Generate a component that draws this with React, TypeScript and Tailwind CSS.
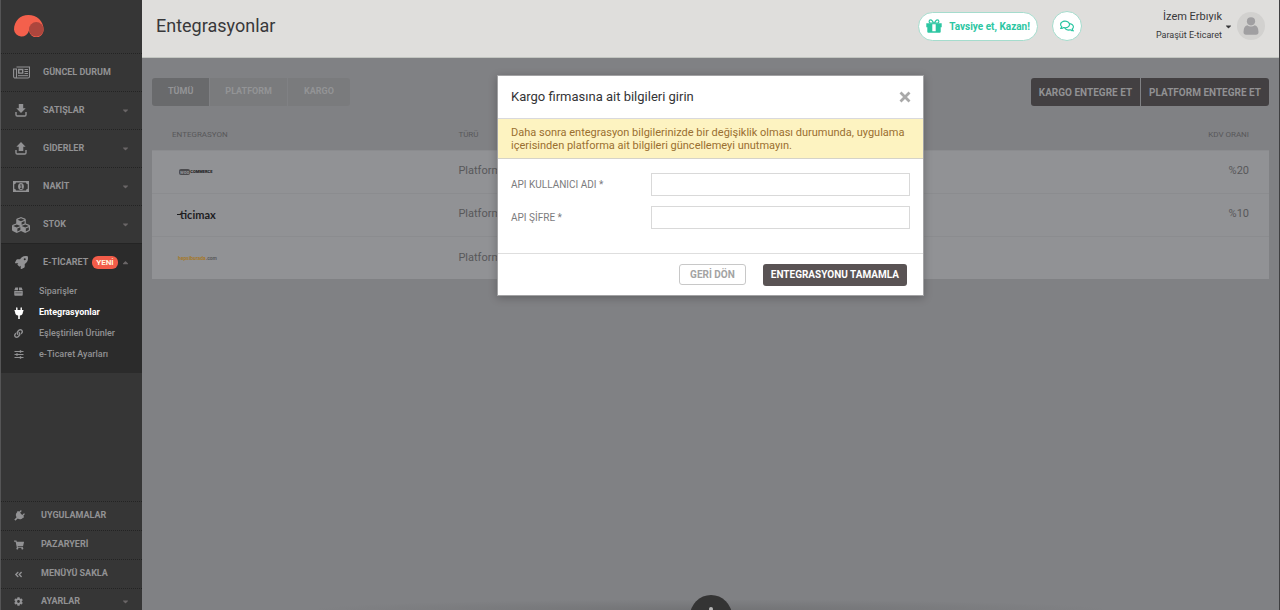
import type { ReactNode } from "react";
import {
  FaAngleDoubleLeft,
  FaCaretDown,
  FaCaretUp,
  FaCog,
  FaCubes,
  FaLink,
  FaRegComments,
  FaRocket,
  FaShoppingCart,
} from "react-icons/fa";

function NewsIcon() {
  return (
    <svg viewBox="0 0 17 13" className="h-[13px] w-[17px]" fill="none" stroke="currentColor">
      <path d="M3.5 1h13v9.5a1.5 1.5 0 0 1-1.5 1.5H2.2A1.5 1.5 0 0 1 .6 10.500V3H3.500v7.500a1.400 1.400 0 0 1-1.400 1.500" strokeWidth="1.1" />
      <path d="M5.700 3.500h4v3.600h-4z" strokeWidth="1.400" />
      <path d="M11.500 3.500h3.500M11.500 5.500h3.500M11.500 7.500h3.500M5 9.700h10" />
    </svg>
  );
}

function TrayIcon({ up = false }: { up?: boolean }) {
  return (
    <svg viewBox="0 0 12 13" className="h-[13px] w-3" fill="currentColor">
      {up ? <path d="M6 0 10.600 4.700H8.300V9H3.700V4.700H1.400z" /> : <path d="M3.800 0h4.400v4.300h2.500L6 9 1.300 4.300h2.500z" />}
      <path d="M1 8v2.800Q1 12 2.200 12h7.600Q11 12 11 10.800V8" fill="none" stroke="currentColor" strokeWidth="1.400" />
    </svg>
  );
}

function CashIcon() {
  return (
    <svg viewBox="0 0 16 11" className="h-[11px] w-4">
      <path
        fill="currentColor"
        fillRule="evenodd"
        d="M0 0h16v11H0zM3 1.400A1.800 1.800 0 0 1 1.300 3.200v4.600A1.800 1.800 0 0 1 3 9.600h10a1.800 1.800 0 0 1 1.700-1.800V3.200A1.800 1.800 0 0 1 13 1.400z"
      />
      <ellipse cx="8" cy="5.500" rx="2.900" ry="3.600" fill="currentColor" />
      <path d="M7.200 4.200 8.200 3.500v3.700M7 7.500h2.300" stroke="#363636" fill="none" strokeWidth=".9" />
    </svg>
  );
}

function BoxIcon() {
  return (
    <svg viewBox="0 0 10 10" className="h-[9px] w-[9px]" fill="currentColor">
      <path d="M1.500.5h3v3.200H.3zM5.500.5h3l1.200 3.200H5.500zM.3 4.500h9.400v4.300q0 .9-.9.900H1.200q-.9 0-.9-.9z" />
      <path d="M1.500 6.500h7" stroke="#2b2b2b" strokeWidth=".6" />
    </svg>
  );
}

function PlugIcon() {
  return (
    <svg viewBox="0 0 10 12" className="h-3 w-[10px]" fill="currentColor">
      <path d="M2.100.8Q2.800-.2 3.500.8V3h3V.8Q7.200-.2 7.900.8V3h1.300q.7.700 0 1.400H9C9 7 7.800 8.200 5.800 8.600V12H4.200V8.600C2.200 8.200 1 7 1 4.400H.8Q.1 3.700.8 3h1.300z" />
    </svg>
  );
}

function SlidersIcon() {
  return (
    <svg viewBox="0 0 10 9" className="h-[9px] w-[10px]" stroke="currentColor" fill="none">
      <path d="M.5 1.500h9M.5 4.500h9M.5 7.500h9" />
      <path d="M6.500.3v2.400M3 3.300v2.400M6.500 6.300v2.400" strokeWidth="1.400" />
    </svg>
  );
}

function GiftIcon() {
  return (
    <svg viewBox="0 0 16 14" className="h-[14px] w-4" fill="currentColor">
      <path d="M.3 4.200h6v4h-6zM9.700 4.200h6v4h-6zM1.300 8.200h5v5.500H2.300q-1 0-1-1zM9.700 8.200h5v4.500q0 1-1 1h-4zM6.300 12.200h3.400v1.500H6.300zM6.300 4.200h3.400v1H6.300z" />
      <path d="M7.500 4C6.500 1.500 5.500.8 4.700.8a1.600 1.600 0 0 0 0 3.200zm1 0C9.500 1.500 10.500.8 11.300.8a1.600 1.600 0 0 1 0 3.200z" fill="none" stroke="currentColor" strokeWidth="1.200" />
    </svg>
  );
}

const mainMenu = [
  { label: "GÜNCEL DURUM", icon: <NewsIcon />, caret: false },
  { label: "SATIŞLAR", icon: <TrayIcon />, caret: true },
  { label: "GİDERLER", icon: <TrayIcon up />, caret: true },
  { label: "NAKİT", icon: <CashIcon />, caret: true },
  { label: "STOK", icon: <FaCubes size={18} />, caret: true },
];

const subMenu = [
  { label: "Siparişler", icon: <BoxIcon />, active: false },
  { label: "Entegrasyonlar", icon: <PlugIcon />, active: true },
  { label: "Eşleştirilen Ürünler", icon: <FaLink size={9} />, active: false },
  { label: "e-Ticaret Ayarları", icon: <SlidersIcon />, active: false },
];

const bottomMenu = [
  { label: "UYGULAMALAR", icon: <span className="rotate-45"><PlugIcon /></span> },
  { label: "PAZARYERİ", icon: <FaShoppingCart size={10} /> },
  { label: "MENÜYÜ SAKLA", icon: <FaAngleDoubleLeft size={9} /> },
];

const rows = [
  { id: "woo", logo: <WooLogo />, type: "Platform", vat: "%20" },
  { id: "ticimax", logo: <TicimaxLogo />, type: "Platform", vat: "%10" },
  { id: "hepsiburada", logo: <HepsiLogo />, type: "Platform", vat: "" },
];

function WooLogo() {
  return (
    <span className="ml-[7px] flex items-center text-[#1d1d1f]">
      <span className="rounded-xs bg-[#4b4b4e] px-px text-[5px] leading-[6px] font-bold text-[#919295]">woo</span>
      <span className="text-[4px] leading-[6px] font-black">COMMERCE</span>
    </span>
  );
}

function TicimaxLogo() {
  return (
    <span className="ml-[5px] flex items-center text-[#1d1d1f]">
      <span className="-mr-px h-px w-1 bg-[#1d1d1f]" />
      <span className="font-[Lato,sans-serif] text-[11px] leading-3 font-bold">ticimax</span>
    </span>
  );
}

function HepsiLogo() {
  return (
    <span className="ml-[6px] block text-[5px] leading-[6px] font-bold text-[#a5792a]">
      hepsiburada<span className="text-[#5b5b5d]">.com</span>
    </span>
  );
}

function BottomRow({ icon, children }: { icon: ReactNode; children: ReactNode }) {
  return (
    <>
      <span className="flex w-[11px] justify-center">{icon}</span>
      <span className="ml-[17px]">{children}</span>
    </>
  );
}

function Sidebar() {
  return (
    <aside className="flex h-screen w-[142px] shrink-0 flex-col overflow-hidden border-l border-[#555556] bg-[#363636] text-[9px] font-bold text-[#929294]">
      <a href="#" aria-label="Paraşüt" className="block h-[53px] shrink-0 pt-[15px] pl-[13px]">
        <svg viewBox="0 0 30 22" className="h-[22px] w-[30px]">
          <path fill="#f4604c" d="M0 14.500C0 6 6.300 0 14.300 0 22.800 0 29.600 6 29.600 14.500A7.300 7.300 0 0 1 15 15.600 7.600 7.600 0 0 1 0 14.500z" />
          <circle cx="22.300" cy="14.300" r="7.300" fill="#ad463d" />
        </svg>
      </a>
      <nav>
        {mainMenu.map((item) => (
          <a key={item.label} href="#" className="flex h-[38px] items-center border-t border-dotted border-[#232323] pr-3 pl-[11px]">
            <span className="flex w-[18px] justify-center">{item.icon}</span>
            <span className="ml-[13px] flex-1">{item.label}</span>
            {item.caret && <FaCaretDown size={9} className="text-[#6a6667]" />}
          </a>
        ))}
        <div className="border-t border-[#242424] bg-[#2b2b2b] pb-2">
          <a href="#" className="flex h-[37px] items-center pr-3 pl-[11px]">
            <span className="flex w-[18px] justify-center">
              <FaRocket size={13} />
            </span>
            <span className="ml-[13px] whitespace-nowrap">E-TİCARET</span>
            <span className="ml-1 rounded-md bg-[#f25c49] px-1 text-[8px] leading-[13px] text-[#fff3df]">YENİ</span>
            <FaCaretUp size={9} className="ml-auto text-[#6a6667]" />
          </a>
          {subMenu.map((item) => (
            <a
              key={item.label}
              href="#"
              className={`flex h-[21px] items-center pl-3 ${item.active ? "font-bold text-white" : "font-medium"}`}
            >
              <span className="flex w-[11px] justify-center">{item.icon}</span>
              <span className="ml-[15px]">{item.label}</span>
            </a>
          ))}
        </div>
      </nav>
      <nav className="mt-auto">
        {bottomMenu.map((item) => (
          <a key={item.label} href="#" className="flex h-[29px] items-center border-t border-dotted border-[#232323] pl-3">
            <BottomRow icon={item.icon}>{item.label}</BottomRow>
          </a>
        ))}
        <a href="#" className="flex h-[22px] items-center border-t border-dotted border-[#232323] pt-1 pr-3 pl-3">
          <BottomRow icon={<FaCog size={9} />}>AYARLAR</BottomRow>
          <FaCaretDown size={9} className="ml-auto text-[#6a6667]" />
        </a>
      </nav>
    </aside>
  );
}

function Header() {
  return (
    <header className="flex h-[58px] items-start justify-between border-b border-[#c3c6c1] bg-[#dfdedc] pr-[14px] pl-[14px] text-[#38383a]">
      <h1 className="pt-[14px] text-lg leading-6">Entegrasyonlar</h1>
      <div className="flex items-center pt-2">
        <a
          href="#"
          className="flex h-[29px] items-center gap-[7px] rounded-full border border-[#a5dccd] bg-white px-[7px] text-[10px] font-bold text-[#2cc6a2]"
        >
          <GiftIcon />
          Tavsiye et, Kazan!
        </a>
        <button type="button" aria-label="Mesajlar" className="ml-[14px] flex size-[30px] items-center justify-center rounded-full border border-[#a5dccd] bg-white text-[#2cc6a2]">
          <FaRegComments size={14} />
        </button>
        <button type="button" className="ml-[74px] flex items-center text-right">
          <span>
            <span className="block text-[11px] leading-[18px]">İzem Erbıyık</span>
            <span className="block text-[9px] leading-[18px]">Paraşüt E-ticaret</span>
          </span>
          <FaCaretDown size={9} className="ml-[2px]" />
          <span className="ml-1 flex size-7 items-center justify-center rounded-full bg-[#d2d1cf] text-[#a09fa1]">
            <svg viewBox="0 0 16 18" className="h-[18px] w-4" fill="currentColor">
              <circle cx="8" cy="4.300" r="4.100" />
              <path d="M4.200 8.200Q8 10.700 11.800 8.200 15.500 9.200 15.500 15q0 2.700-2.500 2.700H3Q.5 17.700.5 15q0-5.800 3.700-6.800z" />
            </svg>
          </span>
        </button>
      </div>
    </header>
  );
}

function Modal() {
  return (
    <div
      role="dialog"
      aria-labelledby="modal-title"
      className="w-full max-w-[427px] border border-[#a2a2a4] bg-white shadow-[0_2px_8px_rgba(0,0,0,0.25)]"
    >
      <div className="flex h-[43px] items-center justify-between border-b border-[#d9d9dc] pr-3 pl-[13px]">
        <h2 id="modal-title" className="text-[13px] text-[#343436]">
          Kargo firmasına ait bilgileri girin
        </h2>
        <button type="button" aria-label="Kapat" className="text-[#a9a9a9]">
          <svg viewBox="0 0 12 12" className="size-3" stroke="currentColor" strokeWidth="2.800">
            <path d="m1.500 1.500 9 9m0-9-9 9" />
          </svg>
        </button>
      </div>
      <p className="border-b border-[#d5d3c9] bg-[#fdf3c1] px-[13px] pt-[7px] pb-[6px] text-[11px] leading-[13px] text-[#9a6f30]">
        Daha sonra entegrasyon bilgilerinizde bir değişiklik olması durumunda, uygulama içerisinden platforma ait
        bilgileri güncellemeyi unutmayın.
      </p>
      <form>
        <div className="flex flex-col gap-[10px] pt-[14px] pr-[13px] pb-6 pl-[13px] text-[10px] text-[#7b7b7d]">
          <div className="flex items-center">
            <label htmlFor="api-user" className="w-[140px]">API KULLANICI ADI *</label>
            <input id="api-user" type="text" className="h-[23px] min-w-0 flex-1 border border-[#d9d9d9] bg-white px-2" />
          </div>
          <div className="flex items-center">
            <label htmlFor="api-pass" className="w-[140px]">API ŞİFRE *</label>
            <input id="api-pass" type="text" className="h-[23px] min-w-0 flex-1 border border-[#d9d9d9] bg-white px-2" />
          </div>
        </div>
        <div className="flex h-[42px] items-center justify-end gap-[17px] border-t border-[#dedede] pr-4">
          <button type="button" className="h-[21px] rounded-[3px] border border-[#c8c8c8] px-[10px] text-[10px] font-bold text-[#a3a3a3]">
            GERİ DÖN
          </button>
          <button type="button" className="h-[22px] rounded-[3px] bg-[#595354] px-2 text-[10px] font-bold text-white">
            ENTEGRASYONU TAMAMLA
          </button>
        </div>
      </form>
    </div>
  );
}

export default function App() {
  return (
    <div className="flex h-screen overflow-hidden bg-[#808184] font-[Roboto,sans-serif]">
      <Sidebar />
      <main className="relative min-w-0 flex-1 border-r border-[#3f3f41]">
        <Header />
        <div className="px-[10px] pt-5">
          <div className="flex justify-between font-bold">
            <div className="flex h-7 gap-px overflow-hidden rounded-[3px] text-[9px] text-[#939496]">
              <button type="button" className="bg-[#696a6c] px-4">TÜMÜ</button>
              <button type="button" className="bg-[#7a7b7d] px-[15px]">PLATFORM</button>
              <button type="button" className="bg-[#7a7b7d] px-4">KARGO</button>
            </div>
            <div className="flex h-7 gap-px overflow-hidden rounded-[3px] text-[10px] text-[#919193]">
              <button type="button" className="bg-[#434042] px-2">KARGO ENTEGRE ET</button>
              <button type="button" className="bg-[#434042] px-2">PLATFORM ENTEGRE ET</button>
            </div>
          </div>
          <table className="mt-[14px] w-full text-left text-[#58585a]">
            <thead>
              <tr className="h-[30px] text-[8px]">
                <th className="w-[26%] pl-5 font-normal">ENTEGRASYON</th>
                <th className="pl-4 font-normal">TÜRÜ</th>
                <th className="pr-5 text-right font-normal">KDV ORANI</th>
              </tr>
            </thead>
            <tbody className="bg-[#919295] text-[11px]">
              {rows.map((row) => (
                <tr key={row.id} className="h-[43px] border-t border-[#8b8c8f]">
                  <td className="pl-5">{row.logo}</td>
                  <td className="pl-4">{row.type}</td>
                  <td className="pr-5 text-right">{row.vat}</td>
                </tr>
              ))}
            </tbody>
          </table>
        </div>
        <div className="absolute inset-x-0 top-[75px] flex justify-center">
          <Modal />
        </div>
        <div className="absolute inset-x-0 bottom-0 flex h-[15px] justify-center overflow-hidden bg-[radial-gradient(ellipse_at_bottom,_rgba(60,60,60,0.2),_transparent_50%)]">
          <button type="button" aria-label="Ekle" className="flex size-[42px] shrink-0 justify-center rounded-full bg-[#343434] pt-3">
            <span className="size-1 rounded-full bg-[#b5b5b5]" />
          </button>
        </div>
      </main>
    </div>
  );
}
